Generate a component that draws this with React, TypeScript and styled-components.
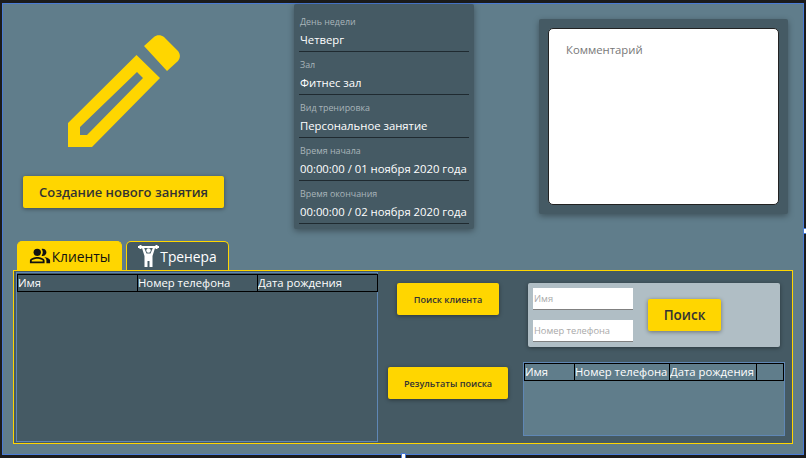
import React from "react";
import styled, { createGlobalStyle } from "styled-components";

const yellow = "#ffd600";
const slate = "#607d8b";
const darkSlate = "#455a64";
const frameBlue = "#4a7bd4";
const tableBlue = "#5f87b5";
const font = `"Open Sans", "Noto Sans", "Liberation Sans", sans-serif`;

const GlobalStyle = createGlobalStyle`
  html, body {
    margin: 0;
    padding: 0;
    width: 806px;
    height: 458px;
    overflow: hidden;
    background: #1b1b1b;
    font-family: ${font};
  }
`;

const infoRows = [
  { label: "День недели", value: "Четверг" },
  { label: "Зал", value: "Фитнес зал" },
  { label: "Вид тренировка", value: "Персональное занятие" },
  { label: "Время начала", value: "00:00:00 / 01 ноября 2020 года" },
  { label: "Время окончания", value: "00:00:00 / 02 ноября 2020 года" },
];

function PencilIcon() {
  return (
    <svg width="113" height="112" viewBox="0 0 113 112">
      <path
        fill={yellow}
        fillRule="evenodd"
        d="M0 88 68.500 20 92 43 24 112H0ZM12 100V92L69 37 75 43 19 100ZM76 11 86 2C88.500-.5 93-.5 96 2L110 16C112.500 19 112.500 23 110 26L99 36Z"
      />
    </svg>
  );
}

function PeopleIcon() {
  return (
    <svg width="22" height="22" viewBox="0 0 24 24" fill="#111">
      <path d="M16.670 13.130C18.040 14.060 19 15.320 19 17v3h4v-3c0-2.180-3.570-3.470-6.330-3.870z" />
      <circle cx="9" cy="8" r="4" />
      <path d="M15 12c2.210 0 4-1.790 4-4s-1.790-4-4-4c-.47 0-.91.1-1.330.24C14.500 5.270 15 6.580 15 8s-.5 2.730-1.330 3.760c.42.14.86.24 1.330.24z" />
      <path d="M9 13c-2.670 0-8 1.340-8 4v3h16v-3c0-2.660-5.330-4-8-4zm6 5H3v-.99C3.200 16.290 6.300 15 9 15s5.800 1.290 6 2v1z" />
    </svg>
  );
}

function LifterIcon() {
  return (
    <svg width="21" height="22" viewBox="0 0 21 22" fill="#fff">
      <rect x="0" y="1" width="21" height="2" />
      <rect x="1.500" y="0" width="2" height="4" />
      <rect x="17.500" y="0" width="2" height="4" />
      <circle cx="10.500" cy="5.500" r="2.200" />
      <path d="M4 3h2.200l2.300 5.500h4L14.800 3H17l-2.500 8v11h-3v-6h-2v6h-3V11Z" />
    </svg>
  );
}

export default function App() {
  return (
    <>
      <GlobalStyle />
      <Frame>
        <TopRow>
          <CreatePane>
            <PencilWrap>
              <PencilIcon />
            </PencilWrap>
            <CreateButton>Создание нового занятия</CreateButton>
          </CreatePane>
          <InfoCard>
            {infoRows.map((row) => (
              <InfoRow key={row.label}>
                <InfoLabel>{row.label}</InfoLabel>
                <InfoValue>{row.value}</InfoValue>
              </InfoRow>
            ))}
          </InfoCard>
          <CommentCard>
            <CommentBox>Комментарий</CommentBox>
          </CommentCard>
        </TopRow>
        <Tabs>
          <Tab $active>
            <PeopleIcon />
            Клиенты
          </Tab>
          <Tab>
            <LifterIcon />
            Тренера
          </Tab>
        </Tabs>
        <TabPanel>
          <ClientTable>
            <HeadRow $columns="120px 120px 120px">
              <HeadCell>Имя</HeadCell>
              <HeadCell>Номер телефона</HeadCell>
              <HeadCell>Дата рождения</HeadCell>
            </HeadRow>
          </ClientTable>
          <SearchColumn>
            <SearchRow>
              <SmallButton $width={102}>Поиск клиента</SmallButton>
              <SearchForm>
                <Fields>
                  <Field placeholder="Имя" />
                  <Field placeholder="Номер телефона" />
                </Fields>
                <SearchButton>Поиск</SearchButton>
              </SearchForm>
            </SearchRow>
            <ResultsRow>
              <SmallButton $width={120}>Результаты поиска</SmallButton>
              <ResultsTable>
                <HeadRow $columns="50px 95px 87px 27px">
                  <HeadCell>Имя</HeadCell>
                  <HeadCell>Номер телефона</HeadCell>
                  <HeadCell>Дата рождения</HeadCell>
                  <HeadCell />
                </HeadRow>
              </ResultsTable>
            </ResultsRow>
          </SearchColumn>
        </TabPanel>
        <Handle $side="right" />
        <Handle $side="bottom" />
      </Frame>
    </>
  );
}

/* ---- styles ---- */
const Frame = styled.div`
  position: relative;
  box-sizing: border-box;
  width: 802px;
  height: 452px;
  margin: 3px 0 0 2px;
  padding: 0 0 0 10px;
  background: ${slate};
  border: 1px solid ${frameBlue};
`;
const Handle = styled.span<{ $side: "right" | "bottom" }>`
  position: absolute;
  width: 3px;
  height: 4px;
  background: #fff;
  box-shadow: 0 0 0 1px ${frameBlue};
  ${({ $side }) =>
    $side === "right"
      ? "right: -4px; top: 225px;"
      : "left: 399px; bottom: -4px;"}
`;
const TopRow = styled.div`
  display: flex;
  height: 237px;
`;
const CreatePane = styled.div`
  display: flex;
  flex-direction: column;
  width: 281px;
  padding-left: 10px;
  box-sizing: border-box;
`;
const PencilWrap = styled.div`
  height: 112px;
  margin: 31px 0 29px 45px;
  line-height: 0;
`;
const YellowButton = styled.button`
  border: 0;
  border-radius: 2px;
  background: ${yellow};
  color: #333;
  font-family: ${font};
  padding: 0;
  box-shadow: 0 1px 4px rgba(0, 0, 0, 0.4);
`;
const CreateButton = styled(YellowButton)`
  width: 201px;
  height: 32px;
  font-size: 13px;
  font-weight: 600;
`;
const InfoCard = styled.div`
  box-sizing: border-box;
  width: 180px;
  height: 225px;
  padding: 5px 5px 0;
  border-radius: 2px;
  background: ${darkSlate};
  box-shadow: 0 2px 6px rgba(0, 0, 0, 0.35);
`;
const InfoRow = styled.div`
  box-sizing: border-box;
  height: 43px;
  padding: 7px 0 0 1px;
  border-bottom: 1px solid #1f2a30;
`;
const InfoLabel = styled.div`
  font-size: 8.900px;
  line-height: 12px;
  color: #a9b5ba;
`;
const InfoValue = styled.div`
  margin-top: 3px;
  font-size: 11.300px;
  line-height: 18px;
  color: #fff;
  white-space: nowrap;
`;
const CommentCard = styled.div`
  box-sizing: border-box;
  width: 249px;
  height: 195px;
  margin: 15px 0 0 65px;
  padding: 9px;
  border-radius: 2px;
  background: ${darkSlate};
  box-shadow: 0 2px 6px rgba(0, 0, 0, 0.35);
`;
const CommentBox = styled.div`
  box-sizing: border-box;
  height: 100%;
  padding: 12px 17px;
  border: 1px solid #222;
  border-radius: 5px;
  background: #fff;
  color: #777;
  font-size: 11.300px;
  line-height: 18px;
`;
const Tabs = styled.div`
  display: flex;
  gap: 4px;
  height: 29px;
  padding-left: 4px;
`;
const Tab = styled.div<{ $active?: boolean }>`
  box-sizing: border-box;
  display: flex;
  align-items: center;
  justify-content: center;
  gap: 1px;
  width: ${({ $active }) => ($active ? "105px" : "103px")};
  border: 1px solid ${yellow};
  border-bottom: 0;
  border-radius: 5px 5px 0 0;
  background: ${({ $active }) => ($active ? yellow : darkSlate)};
  color: ${({ $active }) => ($active ? "#111" : "#fff")};
  font-size: 13.800px;
`;
const TabPanel = styled.div`
  box-sizing: border-box;
  display: flex;
  width: 780px;
  height: 174px;
  border: 1px solid ${yellow};
  background: ${darkSlate};
  padding: 1px 2px;
`;
const ClientTable = styled.div`
  box-sizing: border-box;
  flex: none;
  width: 362px;
  height: 170px;
  padding-top: 1px;
  border: 1px solid ${tableBlue};
`;
const HeadRow = styled.div<{ $columns: string }>`
  display: grid;
  grid-template-columns: ${({ $columns }) => $columns};
`;
const HeadCell = styled.div`
  box-sizing: border-box;
  height: 18px;
  border: 1px solid #000;
  margin-right: -1px;
  color: #fff;
  font-size: 11.300px;
  line-height: 16px;
  white-space: nowrap;
  overflow: hidden;
`;
const SearchColumn = styled.div`
  flex: 1;
  display: flex;
  flex-direction: column;
`;
const SearchRow = styled.div`
  display: flex;
  align-items: flex-start;
  padding: 11px 0 0 19px;
`;
const SmallButton = styled(YellowButton)<{ $width: number }>`
  width: ${({ $width }) => $width}px;
  height: 32px;
  font-size: 9.100px;
  font-weight: 600;
  flex: none;
`;
const SearchForm = styled.div`
  box-sizing: border-box;
  display: flex;
  align-items: center;
  gap: 15px;
  width: 252px;
  height: 64px;
  margin-left: 29px;
  padding: 5px;
  border-radius: 2px;
  background: #b0bec5;
  box-shadow: 0 1px 4px rgba(0, 0, 0, 0.4);
`;
const Fields = styled.div`
  display: flex;
  flex-direction: column;
  gap: 10px;
`;
const Field = styled.input`
  box-sizing: border-box;
  width: 100px;
  height: 22px;
  padding: 0 1px;
  border: 0;
  border-bottom: 1px solid #808080;
  background: #fff;
  font-family: ${font};
  font-size: 9.300px;
  outline: none;
  &::placeholder {
    color: #a9a9a9;
  }
`;
const SearchButton = styled(YellowButton)`
  width: 73px;
  height: 32px;
  font-size: 13.500px;
  font-weight: 600;
`;
const ResultsRow = styled.div`
  display: flex;
  align-items: flex-start;
  padding: 20px 0 0 10px;
`;
const ResultsTable = styled.div`
  box-sizing: border-box;
  width: 262px;
  height: 74px;
  margin: -5px 0 0 15px;
  border: 1px solid ${tableBlue};
  background: ${slate};
`;
